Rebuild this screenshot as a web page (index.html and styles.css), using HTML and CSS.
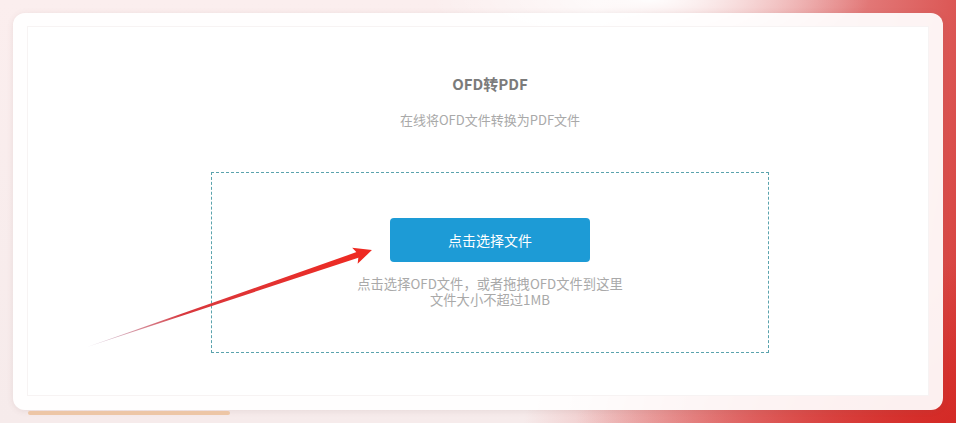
FILE: index.html
```html
<!DOCTYPE html>
<html lang="zh-CN">
<head>
<meta charset="utf-8">
<title>OFD转PDF</title>
<link rel="stylesheet" href="styles.css">
</head>
<body>
<div class="page">
  <div class="card">
    <div class="panel">
      <h1 class="title">OFD转PDF</h1>
      <p class="subtitle">在线将OFD文件转换为PDF文件</p>
      <div class="dropzone">
        <button class="pick-btn" type="button">点击选择文件</button>
        <div class="hint">
          <p class="hint-line">点击选择OFD文件，或者拖拽OFD文件到这里</p>
          <p class="hint-line">文件大小不超过1MB</p>
        </div>
      </div>
    </div>
  </div>
  <div class="progress"></div>
  <svg class="arrow" width="956" height="423" viewBox="0 0 956 423" aria-hidden="true">
    <defs>
      <linearGradient id="ag" x1="0" y1="0" x2="1" y2="0">
        <stop offset="0" stop-color="#b9a6c4" stop-opacity="0.5"/>
        <stop offset="0.35" stop-color="#d8383e"/>
        <stop offset="1" stop-color="#ee2a22"/>
      </linearGradient>
    </defs>
    <g transform="translate(87 347) rotate(-18.8)">
      <polygon points="0,0 288,-3 288,3" fill="url(#ag)"/>
      <polygon points="283,-8.5 301,0 283,8.5 287,0" fill="#ee2a22"/>
    </g>
  </svg>
</div>
</body>
</html>
```

FILE: styles.css
```css
html, body {
  margin: 0;
  padding: 0;
}

body {
  width: 956px;
  height: 423px;
  overflow: hidden;
  font-family: "Noto Sans CJK SC", "Noto Sans", sans-serif;
  background:
    radial-gradient(ellipse 220px 50px at 650px 0px, rgba(255,255,255,0.95), rgba(255,255,255,0) 100%),
    radial-gradient(ellipse 380px 160px at 956px 423px, rgba(212,40,36,0.9), rgba(212,40,36,0) 100%),
    linear-gradient(100deg, rgba(251,238,238,0) 58%, rgba(228,130,130,0.95) 80%, #dc5a58 92%, #d63a36 100%),
    linear-gradient(180deg, #fbeeee 0%, #f6ebeb 100%);
}

.page {
  position: relative;
  padding: 13px 13px 0 13px;
}

.card {
  height: 397px;
  box-sizing: border-box;
  padding: 13px 14px 14px 14px;
  border-radius: 12px;
  background: rgba(255, 255, 255, 0.93);
  box-shadow: 0 1px 6px rgba(120, 80, 80, 0.12);
}

.panel {
  height: 370px;
  box-sizing: border-box;
  border: 1px solid #f7f3f3;
  background: #ffffff;
  padding-left: 24px;
  display: flex;
  flex-direction: column;
  align-items: center;
}

.title {
  margin: 47px 0 0 0;
  font-size: 15px;
  line-height: 20px;
  font-weight: 700;
  color: #7b7b7b;
}

.subtitle {
  margin: 17px 0 0 0;
  font-size: 13px;
  line-height: 18px;
  color: #a9a9a9;
}

.dropzone {
  margin-top: 43px;
  width: 558px;
  height: 181px;
  box-sizing: border-box;
  border: 1px dashed #5aa3ad;
  padding-top: 45px;
  display: flex;
  flex-direction: column;
  align-items: center;
}

.pick-btn {
  width: 200px;
  height: 44px;
  border: 0;
  border-radius: 4px;
  background: #1d9bd6;
  color: #ffffff;
  font-family: inherit;
  font-size: 14px;
  cursor: pointer;
}

.hint {
  margin-top: 14px;
  display: flex;
  flex-direction: column;
  align-items: center;
}

.hint-line {
  margin: 0;
  font-size: 13.3px;
  line-height: 16px;
  color: #a9a9a9;
  text-align: center;
  white-space: nowrap;
}

.progress {
  margin: 1px 0 0 15px;
  width: 202px;
  height: 4px;
  border-radius: 2px;
  background: #edc6a6;
}

.arrow {
  position: absolute;
  left: 0;
  top: 0;
  pointer-events: none;
}
```
